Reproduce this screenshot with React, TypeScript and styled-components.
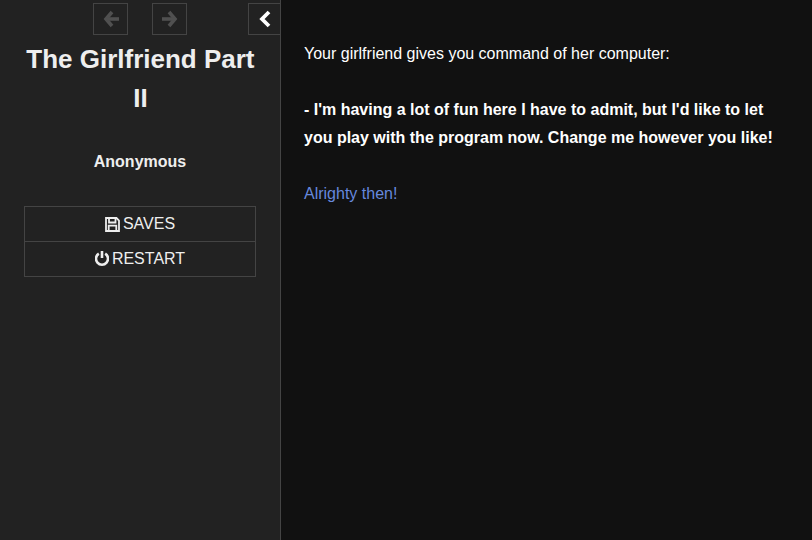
import React from "react";
import styled, { createGlobalStyle } from "styled-components";

const Global = createGlobalStyle`
  html, body { margin: 0; padding: 0; height: 100%; background: #111; }
  body { font-family: "Liberation Sans", Arial, sans-serif; color: #fff; overflow: hidden; }
  #root { height: 100%; }
`;

const Page = styled.div`
  display: flex;
  height: 540px;
  background: #111;
`;

const Sidebar = styled.aside`
  box-sizing: border-box;
  width: 281px;
  height: 100%;
  flex: none;
  background: #222;
  border-right: 1px solid #444;
  display: flex;
  flex-direction: column;
  padding-top: 3px;
`;

const Nav = styled.nav`
  display: flex;
  height: 32px;
  padding-left: 93px;
`;

const NavButton = styled.button<{ $gap?: number; $open?: boolean }>`
  box-sizing: border-box;
  flex: none;
  width: ${(p) => (p.$open ? 32 : 35)}px;
  height: 32px;
  margin-left: ${(p) => p.$gap ?? 0}px;
  padding: 0;
  background: transparent;
  border: 1px solid #444;
  border-right-width: ${(p) => (p.$open ? 0 : 1)}px;
  color: ${(p) => (p.disabled ? "#505050" : "#fff")};
  display: flex;
  align-items: center;
  justify-content: center;
`;

const Title = styled.h1`
  margin: 5px 0 0;
  padding: 0 23.6px 0 24.4px;
  font-size: 26px;
  line-height: 39px;
  font-weight: 700;
  text-align: center;
  color: #eee;
`;

const Author = styled.h3`
  margin: 32px 0 0;
  font-size: 16px;
  line-height: 24px;
  font-weight: 700;
  text-align: center;
  color: #eee;
`;

const Menu = styled.ul`
  list-style: none;
  margin: 32px 24px 0;
  padding: 0;
  border: 1px solid #444;
`;

const MenuItem = styled.li`
  height: 34px;
  display: flex;
  align-items: center;
  justify-content: center;
  gap: 3px;
  font-size: 16px;
  color: #eee;
  & + & {
    border-top: 1px solid #444;
  }
`;

const Passage = styled.main`
  flex: 1;
  padding: 40px 23px 0;
  font-size: 16px;
  line-height: 28px;
  color: #fff;
`;

const Paragraph = styled.p`
  margin: 0 0 28px;
`;

const Bold = styled.strong`
  font-weight: 700;
`;

const Link = styled.a`
  color: #68d;
  text-decoration: none;
  cursor: pointer;
`;

const ArrowLeft = () => (
  <svg width="16" height="18" viewBox="0 0 16 18" fill="none" stroke="currentColor" strokeWidth="3.6" strokeLinejoin="miter">
    <path d="M9 2 L3 9 L9 16" />
    <path d="M3.5 9 H16" />
  </svg>
);

const ArrowRight = () => (
  <svg width="16" height="18" viewBox="0 0 16 18" fill="none" stroke="currentColor" strokeWidth="3.6" strokeLinejoin="miter">
    <path d="M7 2 L13 9 L7 16" />
    <path d="M0 9 H12.5" />
  </svg>
);

const Chevron = () => (
  <svg width="13" height="18" viewBox="0 0 13 18" fill="none" stroke="currentColor" strokeWidth="3.8" strokeLinejoin="miter">
    <path d="M11 2 L4 9 L11 16" />
  </svg>
);

const SaveIcon = () => (
  <svg width="15" height="15" viewBox="0 0 15 15" fill="none" stroke="currentColor">
    <path strokeWidth="1.8" d="M1 1 H11.5 L14 3.5 V14 H1 Z" />
    <path strokeWidth="1.8" d="M4 1.5 V5.5 H10.5 V1.5" />
    <path strokeWidth="1.8" d="M3.7 13.5 V8.7 H11.3 V13.5" />
  </svg>
);

const PowerIcon = () => (
  <svg width="14" height="16" viewBox="0 0 14 16" fill="none" stroke="currentColor" strokeWidth="2.6">
    <path d="M3.8 2.6 A6 6 0 1 0 10.2 2.6" />
    <path d="M7 0 V7" />
  </svg>
);

export default function App() {
  return (
    <>
      <Global />
      <Page>
        <Sidebar>
          <Nav>
            <NavButton disabled><ArrowLeft /></NavButton>
            <NavButton disabled $gap={24}><ArrowRight /></NavButton>
            <NavButton $gap={61} $open><Chevron /></NavButton>
          </Nav>
          <Title>The Girlfriend Part II</Title>
          <Author>Anonymous</Author>
          <Menu>
            <MenuItem><SaveIcon /> SAVES</MenuItem>
            <MenuItem><PowerIcon /> RESTART</MenuItem>
          </Menu>
        </Sidebar>
        <Passage>
          <Paragraph>Your girlfriend gives you command of her computer:</Paragraph>
          <Paragraph><Bold>- I'm having a lot of fun here I have to admit, but I'd like to let you play with the program now. Change me however you like!</Bold></Paragraph>
          <Paragraph><Link>Alrighty then!</Link></Paragraph>
        </Passage>
      </Page>
    </>
  );
}
